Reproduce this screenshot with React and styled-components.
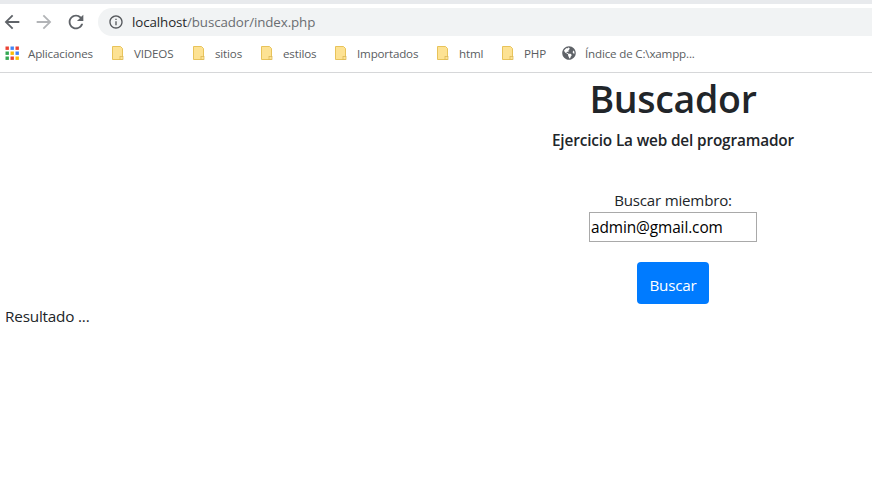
import React from "react";
import styled, { createGlobalStyle } from "styled-components";
import { MdArrowBack, MdArrowForward, MdRefresh, MdInfoOutline } from "react-icons/md";
import { FaGlobeAmericas } from "react-icons/fa";

const Global = createGlobalStyle`
  html, body { margin: 0; padding: 0; background: #fff; }
  body { width: 872px; height: 478px; overflow: hidden; font-family: "Open Sans", "Noto Sans", sans-serif; color: #212529; }
`;

const Browser = styled.header`
  border-top: 4px solid #e8eaed;
  border-bottom: 1px solid #d6d7d9;
  height: 68px;
  box-sizing: content-box;
`;
const Toolbar = styled.div`
  display: flex;
  align-items: center;
  height: 28px;
  padding-top: 4px;
`;
const NavButton = styled.span`
  display: flex;
  width: 32px;
  justify-content: center;
  color: ${(p) => (p.$off ? "#b2b4b7" : "#5f6368")};
  font-size: 22px;
  &:first-child { margin-left: -4px; }
`;
const Omnibox = styled.div`
  flex: 1;
  height: 28px;
  margin-left: 6px;
  padding-left: 10px;
  display: flex;
  align-items: center;
  gap: 8px;
  background: #f1f3f4;
  border-radius: 14px 0 0 14px;
  font-size: 13.35px;
  letter-spacing: -0.1px;
  color: #6a6d71;
  svg { font-size: 16px; color: #55585c; }
`;
const Host = styled.span`
  color: #26282b;
`;
const Bookmarks = styled.nav`
  display: flex;
  align-items: center;
  height: 34px;
  padding-left: 5px;
`;
const Bookmark = styled.span`
  display: flex;
  align-items: center;
  width: ${(p) => p.$w}px;
  gap: ${(p) => p.$gap}px;
  font-size: 11.6px;
  letter-spacing: -0.17px;
  color: #5a5d61;
  white-space: nowrap;
`;
const Main = styled.main`
  height: 405px;
`;
const Center = styled.section`
  width: 398px;
  margin-left: 474px;
  display: flex;
  flex-direction: column;
  align-items: center;
`;
const Title = styled.h1`
  margin: 2px 0 0;
  font-size: 37.5px;
  line-height: 48px;
  font-weight: 600;
  letter-spacing: -0.3px;
`;
const Subtitle = styled.h5`
  margin: 7px 0 0;
  font-size: 15.35px;
  line-height: 20px;
  font-weight: 600;
  letter-spacing: -0.15px;
`;
const Label = styled.label`
  margin-top: 40px;
  font-size: 15.1px;
  line-height: 20px;
  letter-spacing: -0.2px;
`;
const Input = styled.input`
  box-sizing: border-box;
  display: block;
  width: 168px;
  height: 30px;
  margin-top: 2px;
  padding: 0 1px;
  border: 1px solid #a9a9a9;
  border-radius: 0;
  outline: none;
  font: 15.4px "Open Sans", sans-serif;
  letter-spacing: -0.1px;
  color: #000;
`;
const Button = styled.button`
  margin-top: 20px;
  width: 72px;
  height: 42px;
  border: none;
  border-radius: 4px;
  background: #007bff;
  color: #fff;
  font: 15.2px "Open Sans", sans-serif;
  letter-spacing: -0.2px;
  padding: 3px 0 0;
`;
const Result = styled.div`
  margin: 1px 0 0 5px;
  font-size: 15.3px;
  line-height: 22px;
  letter-spacing: -0.2px;
`;

const Folder = () => (
  <svg width="13" height="16" viewBox="0 0 13 16">
    <path d="M1.5 1.5h8l2 2v11h-10z" fill="#fde293" stroke="#e8c35a" />
    <rect x="9" y="11.5" width="3" height="3" fill="#fde293" stroke="#d9b552" strokeWidth=".7" />
  </svg>
);

const AppsGrid = () => {
  const colors = ["#ea4335", "#4285f4", "#ea4335", "#34a853", "#fbbc05", "#4285f4", "#34a853", "#ea4335", "#fbbc05"];
  return (
    <svg width="15" height="15" viewBox="0 0 15 15">
      {colors.map((c, i) => (
        <rect key={i} x={(i % 3) * 5 + 0.5} y={Math.floor(i / 3) * 5 + 0.5} width="3.4" height="3.4" fill={c} />
      ))}
    </svg>
  );
};

const folders = [
  ["VIDEOS", 81],
  ["sitios", 68],
  ["estilos", 74],
  ["Importados", 102],
  ["html", 65],
  ["PHP", 61],
];

export default function App() {
  return (
    <>
      <Global />
      <Browser>
        <Toolbar>
          <NavButton><MdArrowBack /></NavButton>
          <NavButton $off><MdArrowForward /></NavButton>
          <NavButton><MdRefresh /></NavButton>
          <Omnibox>
            <MdInfoOutline />
            <span><Host>localhost</Host>/buscador/index.php</span>
          </Omnibox>
        </Toolbar>
        <Bookmarks>
          <Bookmark $w={106} $gap={8}><AppsGrid />Aplicaciones</Bookmark>
          {folders.map(([name, w]) => (
            <Bookmark key={name} $w={w} $gap={10}><Folder />{name}</Bookmark>
          ))}
          <Bookmark $w={140} $gap={9}>
            <FaGlobeAmericas size={14} color="#5f6368" />Índice de C:\xampp...
          </Bookmark>
        </Bookmarks>
      </Browser>
      <Main>
        <Center>
          <Title>Buscador</Title>
          <Subtitle>Ejercicio La web del programador</Subtitle>
          <Label htmlFor="q">Buscar miembro:</Label>
          <Input id="q" defaultValue="admin@gmail.com" />
          <Button>Buscar</Button>
        </Center>
        <Result>Resultado ...</Result>
      </Main>
    </>
  );
}
